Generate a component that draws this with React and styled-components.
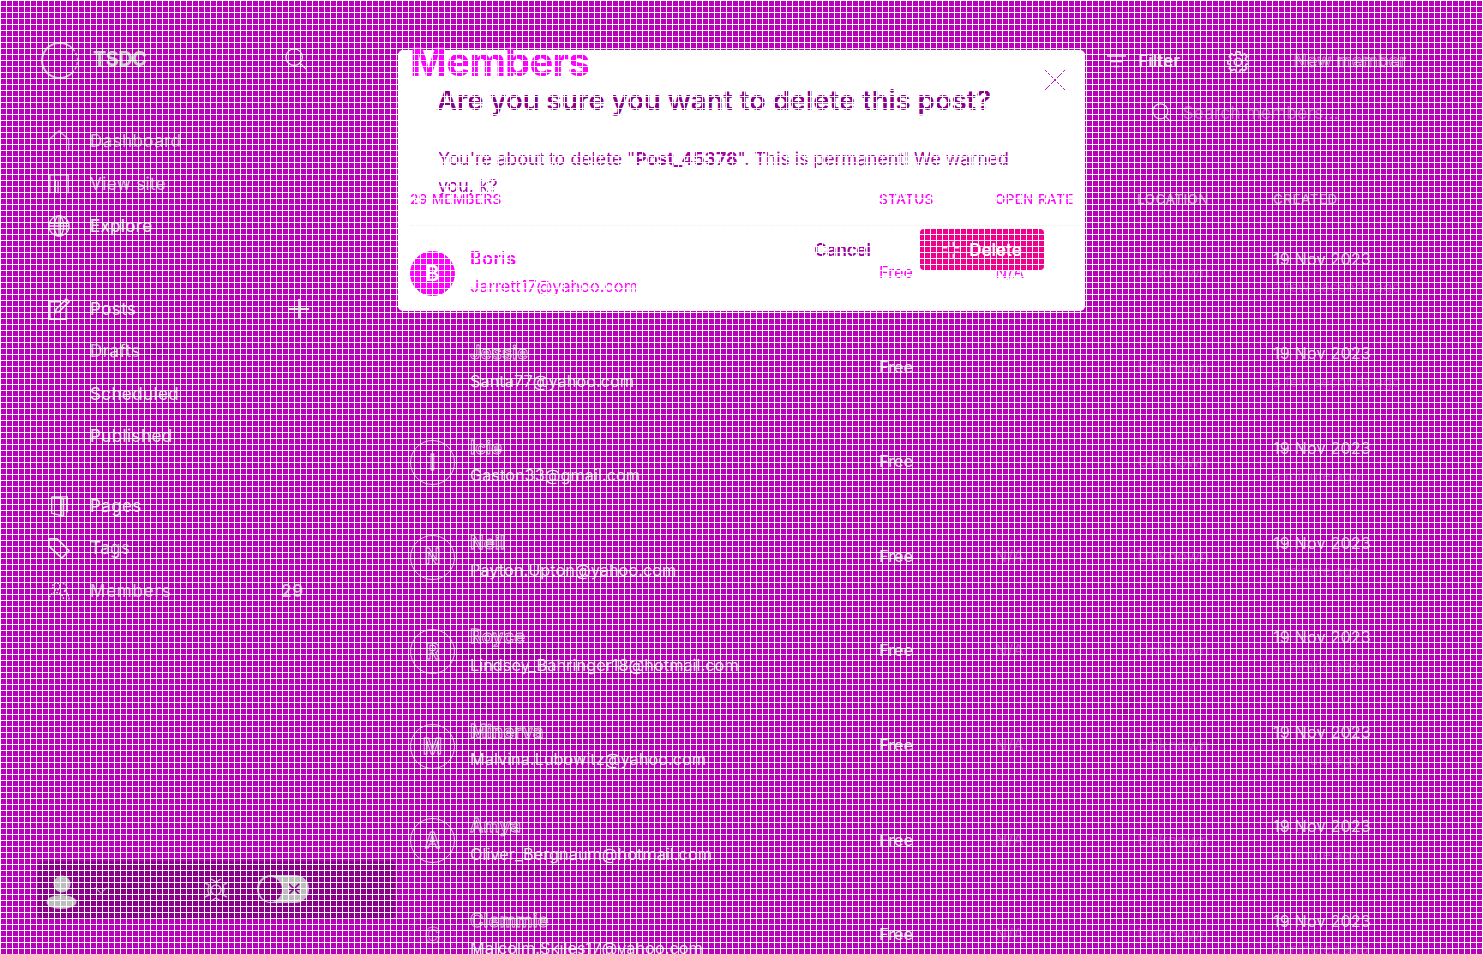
import React from 'react';
import styled, { createGlobalStyle } from 'styled-components';

const BG = '#bb00bb';
const LIGHT = '#dedede';

const Global = createGlobalStyle`
  * { box-sizing: border-box; }
  html, body { margin: 0; padding: 0; overflow: hidden; background: ${BG}; }
  body { font-family: Inter, "Liberation Sans", sans-serif; color: ${LIGHT}; }
`;

const Page = styled.div`
  position: relative;
  display: flex;
  width: 1483px;
  height: 954px;
  overflow: hidden;
  background: ${BG};
`;
const Mesh = styled.svg`
  position: absolute;
  inset: 0;
  z-index: 5;
  width: 1483px;
  height: 954px;
  pointer-events: none;
`;

const Sidebar = styled.aside`
  width: 397px;
  height: 954px;
  flex: none;
  display: flex;
  flex-direction: column;
`;
const Brand = styled.div`
  display: flex;
  align-items: center;
  height: 40px;
  margin: 39px 90px 1px 41px;
  font-size: 20px;
  font-weight: 700;
  letter-spacing: -0.6px;
  color: #c9c9c9;
  & > svg:last-child { margin-left: auto; margin-right: 0; }
`;
const Logo = styled.div`
  width: 37px;
  height: 37px;
  margin: 2px 15px 0 0;
  border: 2px solid #c9c9c9;
  border-right: 1px dashed #c9c9c9;
  border-radius: 50%;
`;
const Nav = styled.nav`
  display: flex;
  flex-direction: column;
  margin-top: ${(p) => p.$gap}px;
`;
const NavItem = styled.div`
  display: flex;
  align-items: center;
  height: 42.4px;
  padding: 0 87px 0 48px;
  font-size: 17px;
  font-weight: ${(p) => p.$weight || 400};
  letter-spacing: ${(p) => p.$track || 0.4}px;
  color: ${(p) => p.$tone || LIGHT};
`;
const NavIcon = styled.span`
  display: flex;
  width: 42px;
`;
const NavEnd = styled.span`
  display: flex;
  margin-left: auto;
  padding-right: ${(p) => p.$inset || 0}px;
  font-weight: 600;
`;
const Account = styled.div`
  display: flex;
  align-items: center;
  height: 57px;
  width: 357px;
  margin: auto 0 36px 38px;
  padding: 0 0 0 8px;
  border-radius: 4px;
  background: #8b008b;
  & > svg:first-child { margin-top: 4px; }
  & > svg:nth-child(2) { margin-left: 16px; }
  & > svg:nth-child(3) { margin-left: 95px; }
`;
const Switch = styled.div`
  display: flex;
  align-items: center;
  justify-content: space-between;
  width: 52px;
  height: 28px;
  margin: -1px 0 0 29px;
  padding: 1px 8px 1px 2px;
  border-radius: 14px;
  background: #bdbdbd;
`;
const Knob = styled.span`
  width: 23px;
  height: 25px;
  border-radius: 50%;
  background: #8b008b;
`;

const Main = styled.main`
  position: relative;
  z-index: 2;
  flex: 1;
  padding: 40px 62px 0 13px;
`;
const Header = styled.header`
  display: flex;
  align-items: center;
  height: 42px;
`;
const Title = styled.h1`
  margin: 2px auto 0 0;
  font-size: 40px;
  line-height: 42px;
  font-weight: 700;
  letter-spacing: -0.85px;
  color: #f0f;
`;
const FilterButton = styled.div`
  display: flex;
  align-items: center;
  gap: 12px;
  margin-right: 47px;
  font-size: 17px;
  font-weight: 600;
`;
const AddButton = styled.div`
  display: flex;
  align-items: center;
  justify-content: center;
  width: 142px;
  height: 42px;
  margin-left: 30px;
  font-size: 17px;
  font-weight: 500;
  letter-spacing: 0.4px;
  color: ${BG};
  -webkit-text-stroke: 0.7px #d2b8d2;
`;
const Search = styled.div`
  display: flex;
  align-items: center;
  justify-content: flex-end;
  gap: 11px;
  height: 42px;
  margin-top: 10px;
  padding-right: 82px;
  font-size: 17px;
  letter-spacing: 0.3px;
`;
const Faint = styled.span`
  color: rgba(225, 215, 225, ${(p) => p.$level || 0.3});
`;
const columns = '469px 116px 142px 136px 1fr';
const TableHead = styled.div`
  display: grid;
  grid-template-columns: ${columns};
  align-items: center;
  width: 1000px;
  height: 53px;
  margin-top: 39px;
  padding-bottom: 2px;
  font-size: 13.5px;
  font-weight: 500;
  letter-spacing: 0.4px;
  color: #f0f;
  background: linear-gradient(#f6f6f6, #f6f6f6) left bottom / 675px 1px no-repeat;
`;
const Row = styled.div`
  display: grid;
  grid-template-columns: ${columns};
  align-items: center;
  width: 1000px;
  height: 94.6px;
  font-size: 16.3px;
  line-height: 27.5px;
  color: ${(p) => (p.$front ? '#ff00ff' : LIGHT)};
`;
const Cell = styled.span`
  margin-top: -1px;
`;
/* The first open rate starts below the lower edge of the dialog's button. */
const CoveredCell = styled(Cell)`
  clip-path: inset(12px 0 0 0);
`;
const Member = styled.div`
  display: flex;
  align-items: center;
  gap: 15px;
`;
const Avatar = styled.div`
  display: flex;
  align-items: center;
  justify-content: center;
  width: 45px;
  height: 45px;
  border-radius: 50%;
  font-size: 21px;
  font-weight: 600;
  visibility: ${(p) => (p.$hidden ? 'hidden' : 'visible')};
  opacity: ${(p) => (p.$last ? 0.6 : 1)};
  border: 1px ${(p) => (p.$last ? 'dotted' : 'solid')} ${(p) => (p.$front ? '#f0f' : p.$last ? '#cc60cc' : '#d8c0d8')};
  background: ${(p) => (p.$front ? '#f0f' : BG)};
  color: ${(p) => (p.$front ? '#fff' : BG)};
  -webkit-text-stroke: ${(p) => (p.$front ? '0' : '0.9px #d8d0d8')};
`;
const Name = styled.div`
  margin-top: -1px;
  font-size: 18px;
  line-height: 28.5px;
  font-weight: 600;
  letter-spacing: 0.35px;
  color: ${(p) => (p.$front ? '#ff00ff' : BG)};
  -webkit-text-stroke: ${(p) => (p.$front ? '0' : '0.8px #d8d0d8')};
`;
const Email = styled.div`
  letter-spacing: 0.03px;
`;
const DateText = styled.div`
  letter-spacing: 0.1px;
`;
const Ago = styled.div`
  font-size: 14.3px;
  white-space: nowrap;
`;

const Dialog = styled.section`
  position: absolute;
  z-index: 1;
  left: 398px;
  top: 50px;
  width: 687px;
  height: 261px;
  padding: 33px 41px 0 40px;
  border-radius: 5px;
  background: #fff;
`;
const DialogTitle = styled.h2`
  margin: 0 0 0 -1px;
  font-size: 27.5px;
  line-height: 34px;
  font-weight: 600;
  letter-spacing: -0.04px;
  color: #8b008b;
  white-space: nowrap;
`;
const DialogText = styled.p`
  margin: 28px 0 0;
  width: 600px;
  font-size: 17.7px;
  line-height: 27px;
  color: #a800a8;
`;
const DialogActions = styled.div`
  display: flex;
  align-items: center;
  justify-content: flex-end;
  gap: 49px;
  margin-top: 30px;
  font-size: 17px;
  font-weight: 600;
  letter-spacing: -0.05px;
  color: #a000a0;
`;
const DeleteButton = styled.div`
  display: flex;
  align-items: center;
  justify-content: center;
  gap: 9px;
  width: 124px;
  height: 41px;
  border-radius: 4px;
  background: #f0008c;
  color: #fff;
`;
const CloseSlot = styled.div`
  position: absolute;
  top: 19px;
  right: 19px;
  display: flex;
`;

const Ghost = styled.span`
  position: absolute;
  left: ${(p) => p.$x}px;
  top: ${(p) => p.$y}px;
  transform: translateY(-50%);
  font-size: ${(p) => p.$size || 17}px;
  font-weight: ${(p) => p.$weight || 500};
  color: rgba(112, 0, 112, ${(p) => p.$level || 0.3});
  white-space: nowrap;
`;

function Icon({ size = 22, width = 1.4, color = LIGHT, children }) {
  return (
    <svg width={size} height={size} viewBox="0 0 24 24" fill="none" stroke={color} strokeWidth={width}>
      {children}
    </svg>
  );
}
const gear = 'M10 2h4l.6 3 2 .9 2.6-1.7 2.6 2.8-1.7 2.5.8 2 2.6.5v3l-2.7.6-.8 2 1.5 2.4-2.7 2.5-2.4-1.4-2 .9-.6 2.5h-3.6l-.6-2.5-2-.9-2.4 1.4-2.7-2.5 1.5-2.4-.8-2L.8 15v-3l2.6-.5.8-2L2.5 7l2.7-2.8 2.5 1.7 1.8-.9z';
const Gear = ({ size, color }) => (
  <Icon size={size} color={color} width={1.8}>
    <path d={gear} />
    <circle cx="12" cy="13" r="4" />
  </Icon>
);
const icons = {
  Dashboard: <path d="M1.5 22V10L12 1l10.500 9v12" strokeOpacity="0.7" />,
  'View site': <path d="M2 2h20v20M2 2v20M8 7v15M11 9v13" />,
  Explore: (
    <>
      <circle cx="12" cy="12" r="11" />
      <ellipse cx="12" cy="12" rx="5" ry="11" />
      <path d="M1 9h22M1 12h22M1 15h22M12 1v22" />
    </>
  ),
  Posts: <path d="M14 4H2v19h18V11M9 12l11-11 3 3-11 11-4 1zM18 3l3 3" strokeWidth="1.800" />,
  Pages: <path d="M4 2h17v17M4 2v18l13 3V4L4 2M15 3v19" />,
  Tags: <path d="M1 2h9l13 13-8 8L1 10z" strokeWidth="1.800" />,
  Members: (
    <g strokeDasharray="2 1.2">
      <circle cx="9" cy="7" r="4" />
      <path d="M1 22c0-11 16-11 16 0M16 4c6 0 6 7 1 8 4 1 6 5 6 10" />
    </g>
  ),
};
const Glass = ({ size }) => (
  <Icon size={size}>
    <circle cx="10" cy="10" r="9" />
    <path d="M16 16l7 7" />
  </Icon>
);

function Item({ label, end, inset, ...rest }) {
  return (
    <NavItem {...rest}>
      <NavIcon>{icons[label] && <Icon>{icons[label]}</Icon>}</NavIcon>
      {label}
      {end && <NavEnd $inset={inset}>{end}</NavEnd>}
    </NavItem>
  );
}

const members = [
  ['Boris', 'Jarrett17@yahoo.com', 'a few seconds ago'],
  ['Jessie', 'Santa77@yahoo.com', 'a few seconds ago'],
  ['Icie', 'Gaston33@gmail.com', 'a minute ago'],
  ['Neil', 'Payton.Upton@yahoo.com', 'a minute ago'],
  ['Royce', 'Lindsey_Bahringer18@hotmail.com', 'a minute ago'],
  ['Minerva', 'Malvina.Lubowitz@yahoo.com', 'a minute ago'],
  ['Amya', 'Oliver_Bergnaum@hotmail.com', 'a minute ago'],
  ['Clemmie', 'Malcolm.Skiles17@yahoo.com', '2 minutes ago'],
];

const ghosts = [
  [94, 142, 'Dashboard', 17, 600],
  [90, 351, 'Scheduled', 17, 500],
  [90, 463, 'Pages', 17, 500],
  [90, 548, 'Members', 17, 500],
  [292, 548, '2', 17, 500],
  [441, 652, 'Engagement', 19, 700],
  [464, 702, '%', 28, 600],
  [442, 740, 'Engaged in the last 30 days', 16, 500],
  [1117, 704, '2', 33, 600],
  [1117, 740, 'Newsletter subscribers', 16, 600],
  [441, 870, 'Recent posts', 19, 700],
  [596, 870, 'Member activity', 18, 500],
  [441, 914, 'TITLE', 14, 500],
  [1100, 914, 'OPEN RATE', 14, 500],
];

export default function App() {
  return (
    <Page>
      <Global />
      <Sidebar>
        <Brand>
          <Logo />
          TSDC
          <Glass size={22} />
        </Brand>
        <Nav $gap={40}>
          <Item label="Dashboard" $tone="#d0b8d0" />
          <Item label="View site" $tone="#d4b8d4" />
          <Item label="Explore" $weight={500} $track={0.2} />
        </Nav>
        <Nav $gap={40.5}>
          <Item label="Posts" end={<Icon width={2}><path d="M12 1v22M1 12h22" /></Icon>} />
          <Item label="Drafts" />
          <Item label="Scheduled" />
          <Item label="Published" />
        </Nav>
        <Nav $gap={27.5}>
          <Item label="Pages" />
          <Item label="Tags" />
          <Item label="Members" $tone="#dcb4dc" $track={0.8} end="29" inset={6} />
        </Nav>
        <Account>
          <svg width="31" height="34" viewBox="0 0 31 34" fill="#bdbdbd">
            <circle cx="16" cy="9" r="8.500" />
            <ellipse cx="15.500" cy="27" rx="15" ry="7" />
          </svg>
          <Icon size={16}><path d="M3 8l9 9 9-9" /></Icon>
          <Icon size={24} color="#cfa8cf">
            <circle cx="12" cy="12" r="5" />
            <path d="M7 1l5 3 5-3M7 23l5-3 5 3M1 5l4 2-1 5 1 5-4 2M23 5l-4 2 1 5-1 5 4 2" />
          </Icon>
          <Switch>
            <Knob />
            <Icon size={14} width={3} color="#8b008b"><path d="M3 3l18 18M21 3L3 21M2 12h20" /></Icon>
          </Switch>
        </Account>
      </Sidebar>

      <Dialog>
        <DialogTitle>Are you sure you want to delete this post?</DialogTitle>
        <DialogText>
          You're about to delete "<b>Post_45378</b>". This is permanent! We warned you, k?
        </DialogText>
        <DialogActions>
          Cancel
          <DeleteButton>
            <Icon size={18} color="#ffd0ea" width={2}>
              <path d="M9 1v6M15 1v6M9 17v6M15 17v6M1 9h6M1 15h6M17 9h6M17 15h6" />
            </Icon>
            Delete
          </DeleteButton>
        </DialogActions>
        <CloseSlot>
          <Icon color={BG} width={1}><path d="M1 1l22 22M23 1L1 23" /></Icon>
        </CloseSlot>
      </Dialog>

      <Main>
        <Header>
          <Title>Members</Title>
          <FilterButton>
            <svg width="19" height="14" fill="none" stroke={LIGHT} strokeWidth="1.500">
              <path d="M0 2h19M4 7.500h11M6.500 12.500h6" />
            </svg>
            Filter
          </FilterButton>
          <Gear size={22} />
          <AddButton>New member</AddButton>
        </Header>
        <Search>
          <Glass size={20} />
          <Faint $level={0.4}>Search members...</Faint>
        </Search>
        <TableHead>
          <span>29 MEMBERS</span>
          <span>STATUS</span>
          <span>OPEN RATE</span>
          <Faint $level={0.7}>LOCATION</Faint>
          <Faint $level={0.7}>CREATED</Faint>
        </TableHead>
        {members.map(([name, email, ago], i) => (
          <Row key={name} $front={i === 0}>
            <Member>
              <Avatar $front={i === 0} $hidden={i === 1} $last={i === 7}>{name[0]}</Avatar>
              <div>
                <Name $front={i === 0}>{name}</Name>
                <Email>{email}</Email>
              </div>
            </Member>
            <Cell>Free</Cell>
            {i === 0 ? (
              <CoveredCell>N/A</CoveredCell>
            ) : (
              <Cell><Faint $level={i < 3 ? 0.01 : 0.3}>N/A</Faint></Cell>
            )}
            <Cell><Faint $level={0.22}>Unknown</Faint></Cell>
            <div>
              <DateText><Faint $level={0.9}>19 Nov 2023</Faint></DateText>
              <Ago><Faint $level={0.22}>{ago}</Faint></Ago>
            </div>
          </Row>
        ))}
      </Main>

      {ghosts.map(([x, y, text, size, weight]) => (
        <Ghost key={`${x}-${y}`} $x={x} $y={y} $size={size} $weight={weight}>{text}</Ghost>
      ))}
      <Ghost $x={88} $y={888} $size={18} $weight={600} $level={0.5}>Power</Ghost>
      <Ghost $x={362} $y={889} $size={14} $level={0.5}>✕</Ghost>
      <Mesh shapeRendering="crispEdges">
        <defs>
          <pattern id="mesh" width="6" height="6" patternUnits="userSpaceOnUse">
            <path d="M0 0H6V1H1V6H0Z" fill="#fff" />
          </pattern>
        </defs>
        <rect width="1483" height="954" fill="url(#mesh)" />
      </Mesh>
    </Page>
  );
}
